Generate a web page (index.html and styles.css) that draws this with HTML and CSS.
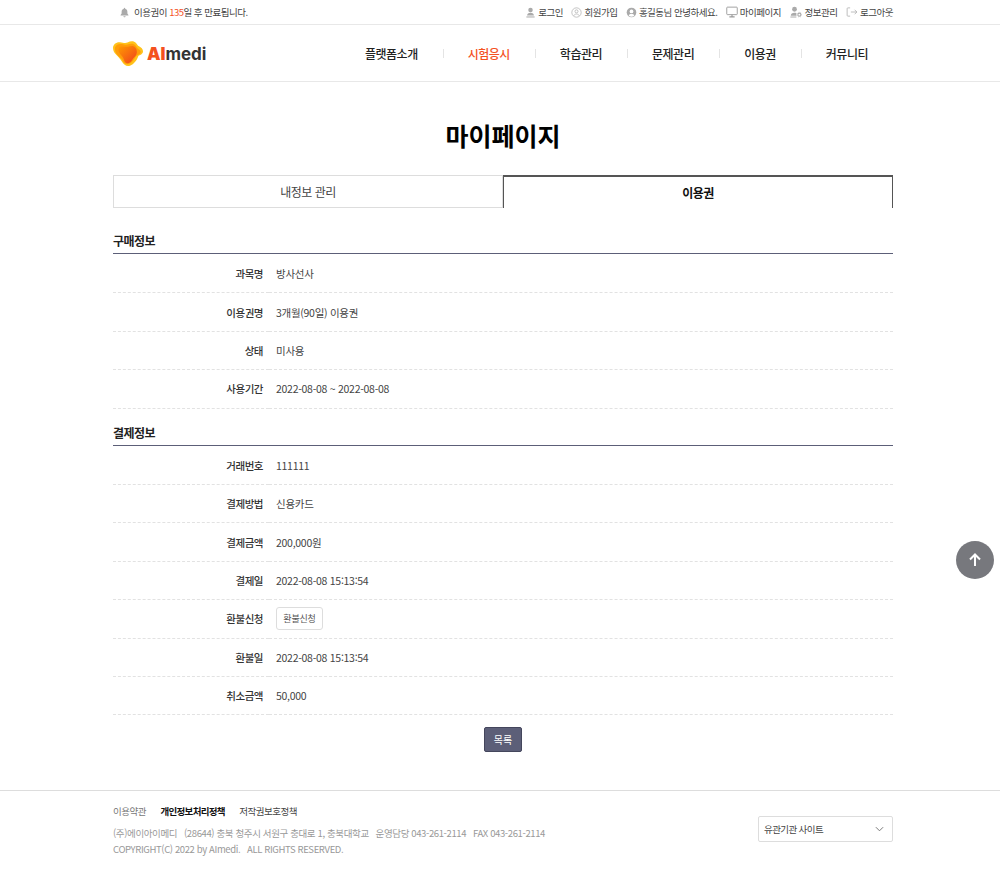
FILE: index.html
```html
<!DOCTYPE html>
<html lang="ko">
<head>
  <meta charset="UTF-8" />
  <title>AImedi - 마이페이지</title>
  <link rel="stylesheet" href="styles.css">
</head>
<body>
  <div class="topbar">
    <div class="inner topbar-inner">
      <div class="notice">
        <svg class="ico" viewBox="0 0 16 16"><path fill="#aaa" d="M8 1c.6 0 1 .4 1 1v.6c2 .5 3.200 2.200 3.200 4.200v2.800l1.500 2v.9H2.300v-.9l1.500-2V6.800c0-2 1.200-3.700 3.200-4.200V2c0-.6.400-1 1-1zM6.400 13.500h3.200c0 .9-.7 1.500-1.600 1.500s-1.600-.6-1.600-1.500z"/></svg>
        <span>이용권이 <em>135</em>일 후 만료됩니다.</span>
      </div>
      <ul class="util">
        <li>
          <svg class="ico" viewBox="0 0 16 16"><circle cx="8" cy="4.300" r="3.300" fill="#aaa"/><path fill="#aaa" d="M3 12.500c0-2.300 2-4 5-4s5 1.700 5 4z"/><path stroke="#aaa" stroke-width="1.500" d="M2 14.500h12"/></svg>
          로그인
        </li>
        <li>
          <svg class="ico" viewBox="0 0 16 16"><circle cx="8" cy="8" r="6.800" fill="none" stroke="#aaa"/><circle cx="8" cy="6.300" r="2.200" fill="none" stroke="#aaa"/><path fill="none" stroke="#aaa" d="M4.300 12.500c.6-1.700 2-2.300 3.700-2.300s3.100.6 3.700 2.300"/></svg>
          회원가입
        </li>
        <li>
          <svg class="ico" viewBox="0 0 16 16"><circle cx="8" cy="8" r="7" fill="#aaa"/><circle cx="8" cy="6.500" r="2.700" fill="#fff"/><path fill="#fff" d="M3.900 12.300c.7-1.500 2.300-2 4.100-2s3.400.5 4.100 2C11 13.500 9.600 14 8 14s-3-.5-4.100-1.700z"/></svg>
          홍길동님 안녕하세요.
        </li>
        <li>
          <svg class="ico ico-wide" viewBox="0 0 16 16"><rect x="1" y="1.500" width="14" height="10" rx="1" fill="none" stroke="#999" stroke-width="1.200"/><path stroke="#999" stroke-width="1.500" d="M8 11.500v2.500M4.500 14.500h7"/></svg>
          마이페이지
        </li>
        <li class="util-info">
          <svg class="ico ico-wide" viewBox="0 0 16 16"><circle cx="6" cy="4.300" r="3.200" fill="#aaa"/><path fill="#aaa" d="M1 13c0-2.500 2-4 5-4 1 0 1.800.2 2.500.5V13z"/><path stroke="#aaa" stroke-width="1.300" d="M.5 14.700h8"/><circle cx="12.500" cy="11.500" r="2" fill="none" stroke="#aaa" stroke-width="1.400"/><circle cx="12.500" cy="11.500" r="3.200" fill="none" stroke="#aaa" stroke-width=".8" stroke-dasharray="1 1.500"/></svg>
          정보관리
        </li>
        <li>
          <svg class="ico ico-wide" viewBox="0 0 16 16"><path fill="none" stroke="#aaa" d="M5.500 2.500H2.500a1 1 0 0 0-1 1v9a1 1 0 0 0 1 1h3M6.500 8h8M11.500 5l3 3-3 3"/></svg>
          로그아웃
        </li>
      </ul>
    </div>
  </div>

  <header class="header">
    <div class="inner header-inner">
      <a class="logo" href="#">
        <svg class="logo-mark" viewBox="0 0 30 25">
          <defs>
            <linearGradient id="logoGrad" x1="0" y1="0" x2="1" y2="1">
              <stop offset="0" stop-color="#ff9a00"/>
              <stop offset="1" stop-color="#f0401f"/>
            </linearGradient>
          </defs>
          <path fill="#ffc21a" d="M0 7C0 3 3.500.8 7 1.200c3 .3 5 1.300 7.500.3C17.500-.2 21-.3 23 2c1.200 1.400 1.500 2.500 3 3.300 2.200 1.200 4 2.700 4 5 0 2.600-2.500 3.700-4.500 4.500C24 19 21 23.500 17 24.700c-3.500 1-6.200-.8-7.800-3.700C7.500 18 5.500 16 3.500 14 1.500 12 0 10 0 7z"/>
          <path fill="#ff9d0a" d="M2 6.500C3 3.500 6 2.500 9 3c2.500.4 4 1.200 6.500.3C18 2.500 21 2.500 22.500 4.500c1 1.500 1.800 3 3.200 3.800 1.500 1 2.500 2.200 1.800 3.700-.8 1.500-3 2-4.300 3-1.700 2.500-4 7-7.700 8-3 .8-5-1.500-6.200-4C8 17 5.500 15.500 4 13.500 2.500 11.500 1.500 9 2 6.500z"/>
          <path fill="url(#logoGrad)" d="M8 5.500c2.500-.5 4.500.8 7 .2 2.500-.7 5-1.500 7 .5 1.500 1.500 2 3.500 1.800 5.500-.2 3-3 4.500-4.500 7-1.500 2.500-3.500 4-5.800 3.300-2.200-.7-2.500-3.500-3.500-5.500-1-2-3-3-4-5.500C5 9 5.500 6 8 5.500z"/>
        </svg>
        <span class="logo-text"><b>AI</b>medi</span>
      </a>
      <nav class="gnb">
        <a href="#">플랫폼소개</a>
        <a href="#" class="on">시험응시</a>
        <a href="#">학습관리</a>
        <a href="#">문제관리</a>
        <a href="#">이용권</a>
        <a href="#">커뮤니티</a>
      </nav>
    </div>
  </header>

  <main class="inner content">
    <h2 class="page-title">마이페이지</h2>
    <div class="tabs">
      <a href="#" class="tab">내정보 관리</a>
      <a href="#" class="tab active">이용권</a>
    </div>

    <h3 class="sec-title">구매정보</h3>
    <dl class="info">
      <div class="row"><dt>과목명</dt><dd>방사선사</dd></div>
      <div class="row"><dt>이용권명</dt><dd>3개월(90일) 이용권</dd></div>
      <div class="row"><dt>상태</dt><dd>미사용</dd></div>
      <div class="row"><dt>사용기간</dt><dd>2022-08-08 ~ 2022-08-08</dd></div>
    </dl>

    <h3 class="sec-title">결제정보</h3>
    <dl class="info">
      <div class="row"><dt>거래번호</dt><dd>111111</dd></div>
      <div class="row"><dt>결제방법</dt><dd>신용카드</dd></div>
      <div class="row"><dt>결제금액</dt><dd>200,000원</dd></div>
      <div class="row"><dt>결제일</dt><dd>2022-08-08 15:13:54</dd></div>
      <div class="row"><dt>환불신청</dt><dd><button type="button" class="btn-small">환불신청</button></dd></div>
      <div class="row"><dt>환불일</dt><dd>2022-08-08 15:13:54</dd></div>
      <div class="row"><dt>취소금액</dt><dd>50,000</dd></div>
    </dl>

    <div class="actions">
      <button type="button" class="btn-list">목록</button>
    </div>
  </main>

  <footer class="footer">
    <div class="inner footer-inner">
      <div>
        <div class="foot-links">
          <a href="#">이용약관</a>
          <a href="#" class="strong">개인정보처리정책</a>
          <a href="#" class="dark">저작권보호정책</a>
        </div>
        <p class="foot-addr">(주)에이아이메디 &nbsp; (28644) 충북 청주시 서원구 충대로 1, 충북대학교 &nbsp; 운영담당 043-261-2114 &nbsp; FAX 043-261-2114</p>
        <p class="foot-addr">COPYRIGHT(C) 2022 by AImedi. &nbsp; ALL RIGHTS RESERVED.</p>
      </div>
      <div class="site-select">
        <span>유관기관 사이트</span>
        <svg viewBox="0 0 10 6" class="chev"><path fill="none" stroke="#777" stroke-width="1.100" d="M1 1l4 4 4-4"/></svg>
      </div>
    </div>
  </footer>

  <button type="button" class="to-top" aria-label="맨 위로">
    <svg viewBox="0 0 16 16"><path fill="none" stroke="#fff" stroke-width="2" d="M8 14V3M3 7.500L8 2.500l5 5"/></svg>
  </button>
</body>
</html>
```

FILE: styles.css
```css
* {
  margin: 0;
  padding: 0;
  box-sizing: border-box;
}
body {
  font-family: "Noto Sans CJK KR", "Noto Sans", sans-serif;
  font-size: 12px;
  color: #333;
  background: #fff;
}
a {
  color: inherit;
  text-decoration: none;
}
ul {
  list-style: none;
}
button {
  font-family: inherit;
  cursor: pointer;
}
.inner {
  width: 780px;
  margin-left: 113px;
}

/* top bar */
.topbar {
  height: 25px;
  border-bottom: 1px solid #e8e8e8;
  font-size: 9.500px;
  letter-spacing: -0.5px;
  color: #444;
}
.topbar-inner {
  height: 24px;
  display: flex;
  justify-content: space-between;
  align-items: center;
}
.notice {
  display: flex;
  align-items: center;
  gap: 4px;
  padding-left: 6px;
}
.notice em {
  font-style: normal;
  color: #f4511e;
}
.util {
  display: flex;
  gap: 8.500px;
}
.util li {
  display: flex;
  align-items: center;
  gap: 2px;
  white-space: nowrap;
}
.ico {
  width: 11px;
  height: 11px;
  flex: none;
}
.ico-wide {
  width: 12px;
  height: 12px;
}
.util .util-info {
  gap: 3px;
}

/* header */
.header {
  height: 57px;
  border-bottom: 1px solid #e8e8e8;
}
.header-inner {
  height: 56px;
  display: flex;
  justify-content: space-between;
  align-items: center;
}
.logo {
  display: flex;
  align-items: center;
  gap: 4px;
}
.logo-mark {
  width: 30px;
  height: 25px;
}
.logo-text {
  font-family: "Inter", "Noto Sans", sans-serif;
  font-size: 17px;
  font-weight: 700;
  color: #333;
  padding-top: 2px;
}
.logo-text b {
  color: #f4511e;
}
.gnb {
  display: flex;
  align-items: center;
}
.gnb a {
  position: relative;
  font-size: 12px;
  font-weight: 500;
  letter-spacing: -0.5px;
  color: #222;
  padding: 0 25px;
  white-space: nowrap;
}
.gnb a + a::before {
  content: "";
  position: absolute;
  left: 0;
  top: 4px;
  height: 9px;
  border-left: 1px solid #e4e4e4;
}
.gnb a.on {
  color: #f4511e;
}

/* content */
.content {
  height: 708px;
  padding-top: 33px;
}
.page-title {
  font-size: 25px;
  font-weight: 700;
  color: #000;
  text-align: center;
  line-height: 40px;
  margin-bottom: 20px;
}
.tabs {
  display: flex;
  height: 33px;
  margin-bottom: 21px;
}
.tab {
  flex: 1;
  display: flex;
  align-items: center;
  justify-content: center;
  font-size: 12px;
  letter-spacing: -0.5px;
  color: #444;
  border: 1px solid #ddd;
}
.tab.active {
  color: #111;
  font-weight: 700;
  border: 1px solid #555;
  border-top-width: 2px;
  border-bottom: 0;
}
.sec-title {
  font-size: 12px;
  font-weight: 700;
  letter-spacing: -0.5px;
  color: #222;
  line-height: 24px;
  height: 25px;
  border-bottom: 1px solid #5c5f78;
}
.info {
  padding-top: 1px;
  margin-bottom: 12px;
}
.row {
  display: flex;
  height: 38.400px;
  font-size: 10.500px;
}
.row dt,
.row dd {
  display: flex;
  align-items: center;
  border-bottom: 1px dashed #e2e2e2;
}
.row dt {
  width: 156px;
  padding-right: 6px;
  justify-content: flex-end;
  font-weight: 500;
  letter-spacing: -0.5px;
  color: #333;
}
.row dd {
  flex: 1;
  padding-left: 7px;
  letter-spacing: -0.28px;
  color: #444;
}
.btn-small {
  height: 23px;
  width: 47px;
  font-size: 9px;
  letter-spacing: -0.2px;
  color: #555;
  background: #fff;
  border: 1px solid #ddd;
  border-radius: 3px;
  display: block;
}
.actions {
  display: flex;
  justify-content: center;
}
.btn-list {
  width: 38px;
  height: 25px;
  font-size: 10px;
  color: #fff;
  background: #5c5f78;
  border: 1px solid #44465c;
  border-radius: 2px;
}

/* footer */
.footer {
  border-top: 1px solid #ddd;
  height: 80px;
}
.footer-inner {
  display: flex;
  justify-content: space-between;
  align-items: flex-start;
  padding-top: 13px;
}
.foot-links {
  display: flex;
  gap: 14.500px;
  font-size: 9.500px;
  letter-spacing: -0.5px;
  color: #777;
  line-height: 14px;
  margin-bottom: 7px;
}
.foot-links .strong {
  font-weight: 700;
  letter-spacing: -0.7px;
  color: #111;
}
.foot-links .dark {
  color: #444;
}
.foot-addr {
  font-size: 9.500px;
  letter-spacing: -0.38px;
  color: #999;
  line-height: 16px;
}
.site-select {
  width: 135px;
  height: 26px;
  margin-top: 12px;
  padding: 0 8px 0 5px;
  border: 1px solid #ddd;
  border-radius: 2px;
  display: flex;
  justify-content: space-between;
  align-items: center;
  font-size: 9.500px;
  letter-spacing: -0.6px;
  color: #444;
}
.chev {
  width: 9px;
  height: 6px;
}
.to-top {
  position: fixed;
  right: 6px;
  top: 541px;
  width: 38px;
  height: 38px;
  border: 0;
  border-radius: 50%;
  background: #77787d;
  display: flex;
  align-items: center;
  justify-content: center;
}
.to-top svg {
  width: 16px;
  height: 16px;
}
```
